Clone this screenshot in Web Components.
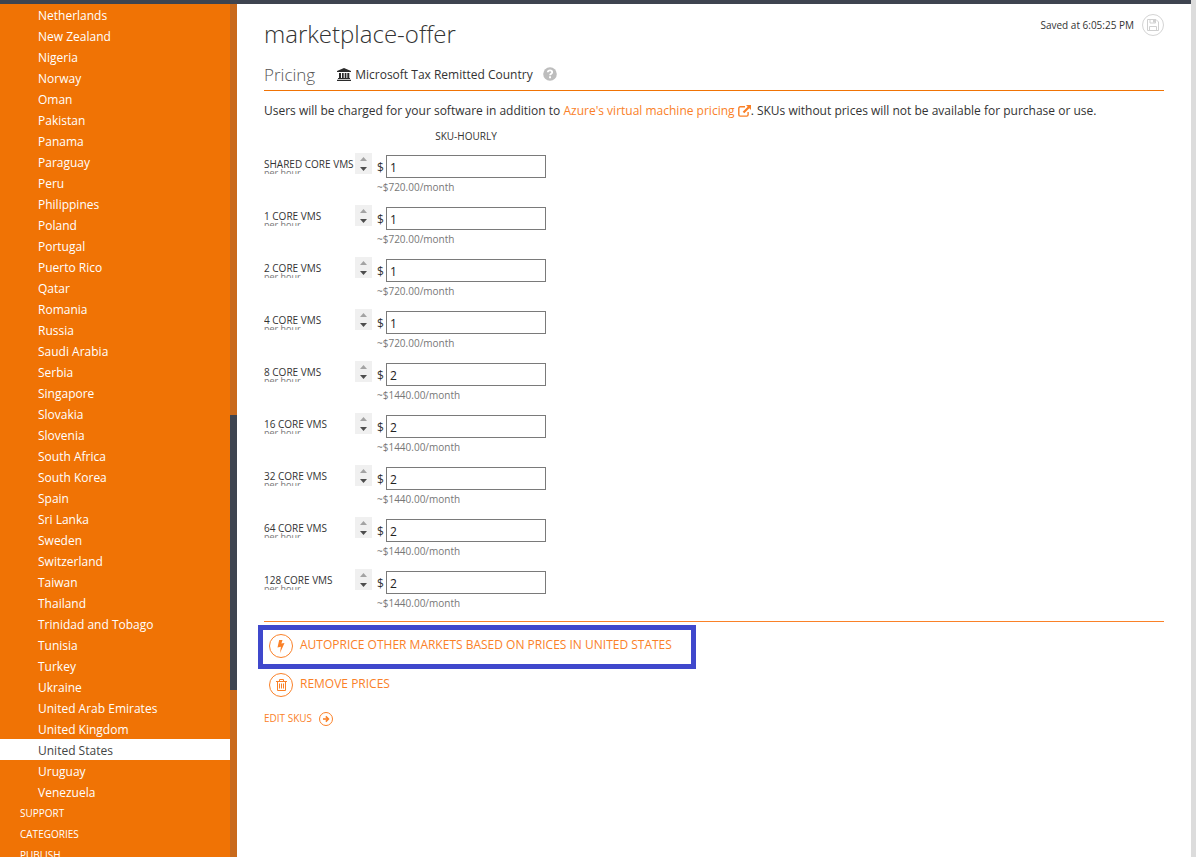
<!DOCTYPE html>
<html lang="en">
<head>
<meta charset="utf-8">
<title>marketplace-offer - Pricing</title>
<style>
  body { margin: 0; font: 12px/21px "Open Sans", "Noto Sans", sans-serif; color: #333;
    --brand: #f07305; --accent: #fa8128; --slate: #3e4450; }
</style>
</head>
<body>
<app-shell>
  <side-nav slot="nav"></side-nav>
  <pricing-page></pricing-page>
</app-shell>
<script>
const define = (name, html, setup) => {
  const t = document.createElement('template');
  t.innerHTML = html;
  customElements.define(name, class extends HTMLElement {
    constructor() {
      super();
      this.attachShadow({ mode: 'open' }).append(t.content.cloneNode(true));
    }
    connectedCallback() { if (setup) setup(this, this.shadowRoot); }
  });
};

define('app-shell', `
<style>
  :host { display: grid; grid-template-rows: 4px 1fr; grid-template-columns: auto 1fr 5px; height: 100vh; overflow: hidden; background: #fff; }
  .top { grid-column: 1 / 3; background: var(--slate); }
  .edge { grid-column: 3; grid-row: 1 / 3; background: #dcdcdc; }
  .nav { grid-row: 2; min-height: 0; }
  main { grid-row: 2; grid-column: 2; min-width: 0; min-height: 0; overflow: hidden; }
</style>
<div class="top"></div><div class="nav"><slot name="nav"></slot></div><main><slot></slot></main><div class="edge"></div>`);

define('nav-link', `
<style>
  :host { display: block; }
  a { display: block; padding: 2px 0 0 38px; line-height: 19px; color: #fff; text-decoration: none; white-space: nowrap; }
  :host([section]) a { padding-left: 20px; font-size: 10px; }
  :host([current]) a { background: #fff; color: #444; }
</style>
<a href="#"><slot></slot></a>`);

define('side-nav', `
<style>
  :host { display: flex; height: 100%; background: var(--brand); }
  nav { width: 230px; overflow: hidden; }
  .track { width: 7px; background: #c96a1c; display: grid; grid-template-rows: 411fr 275fr 167fr; }
  .thumb { grid-row: 2; background: var(--slate); }
</style>
<nav aria-label="Markets"></nav><div class="track"><div class="thumb"></div></div>`,
(host, root) => {
  const nav = root.querySelector('nav');
  const add = (text, attr) => {
    const el = document.createElement('nav-link');
    el.textContent = text;
    if (attr) el.setAttribute(attr, '');
    nav.append(el);
  };
  ['Netherlands','New Zealand','Nigeria','Norway','Oman','Pakistan','Panama','Paraguay','Peru','Philippines','Poland','Portugal','Puerto Rico','Qatar','Romania','Russia','Saudi Arabia','Serbia','Singapore','Slovakia','Slovenia','South Africa','South Korea','Spain','Sri Lanka','Sweden','Switzerland','Taiwan','Thailand','Trinidad and Tobago','Tunisia','Turkey','Ukraine','United Arab Emirates','United Kingdom','United States','Uruguay','Venezuela']
    .forEach(c => add(c, c === 'United States' ? 'current' : ''));
  ['SUPPORT', 'CATEGORIES', 'PUBLISH'].forEach(s => add(s, 'section'));
});

define('price-row', `
<style>
  :host { display: grid; grid-template-columns: 91px 17px 174px; height: 52px; align-items: start; }
  .name { height: 21px; overflow: hidden; white-space: nowrap; }
  label { display: block; padding-top: 5px; font-size: 10px; line-height: 12px; }
  small { display: block; font-size: 9px; line-height: 6px; color: #777; }
  .spin { display: block; width: 17px; height: 21px; background: #f0f0f0; }
  .field { padding: 2px 0 0 5px; }
  .line { display: flex; align-items: center; }
  .cur { width: 9px; padding-top: 2px; }
  input { box-sizing: border-box; width: 160px; height: 23px; border: 1px solid #7a7a7a; padding: 1px 3px 0; font: inherit; color: #222; background: #fff; border-radius: 0; }
  .month { font-size: 10px; line-height: 18px; color: #777; white-space: nowrap; }
</style>
<div class="name"><label for="price"></label><small>per hour</small></div>
<svg class="spin" viewBox="0 0 17 21" aria-hidden="true"><path d="M5 8 8.500 4 12 8z" fill="#a3a3a3"/><path d="M5 14h7l-3.500 4z" fill="#4d4d4d"/></svg>
<div class="field"><div class="line"><span class="cur">$</span><input id="price" type="text"></div><div class="month"></div></div>`,
(host, root) => {
  root.querySelector('label').textContent = host.getAttribute('name');
  root.querySelector('input').value = host.getAttribute('price');
  root.querySelector('.month').textContent = '~$' + host.getAttribute('price') * 720 + '.00/month';
});

define('ring-action', `
<style>
  :host { display: block; }
  button { display: flex; align-items: center; gap: 7px; margin: 0; padding: 0; border: 0; background: none; font: inherit; line-height: 20px; color: var(--accent); white-space: nowrap; cursor: pointer; }
  .ring { box-sizing: border-box; display: grid; place-items: center; width: 24px; height: 24px; border: 1px solid; border-radius: 50%; }
  .text { padding-bottom: 2px; }
</style>
<button type="button"><span class="ring"><slot name="icon"></slot></span><span class="text"><slot></slot></span></button>`);

define('pricing-page', `
<style>
  :host { display: block; padding: 0 27px; }
  header { display: flex; justify-content: space-between; height: 56px; }
  h1 { margin: 0; font-size: 24px; line-height: 60px; font-weight: 300; }
  .saved { display: flex; align-items: center; gap: 8px; height: 42px; font-size: 10px; }
  .saved button { box-sizing: border-box; width: 22px; height: 22px; padding: 0; border: 1px solid #d4d4d4; border-radius: 50%; background: none; color: #d0d0d0; display: grid; place-items: center; }
  .sub { display: flex; align-items: center; height: 28px; padding-bottom: 2px; border-bottom: 1px solid var(--brand); }
  h2 { margin: 0 22px 0 0; font-size: 17px; font-weight: 300; color: #555; }
  .sub svg { margin-right: 4px; }
  .sub .help { margin: 0 0 0 10px; }
  p { margin: 9px 0 0; line-height: 21px; }
  a { color: var(--accent); text-decoration: none; }
  p svg { vertical-align: -2px; }
  .head { width: 160px; margin: 5px 0 7px 122px; text-align: center; font-size: 10px; line-height: 20px; }
  .rows { border-bottom: 1px solid var(--accent); }
  .marked { width: fit-content; margin: 3px 0 0 -6px; padding: 4px 19px 6px 6px; border: 5px solid #3f48cc; }
  .remove { margin: 4px 0 0 5px; }
  .edit { display: flex; width: fit-content; align-items: center; gap: 7px; margin-top: 11px; font-size: 10px; }
</style>
<header><h1>marketplace-offer</h1>
  <div class="saved"><span>Saved at 6:05:25 PM</span><button type="button" aria-label="Save">
    <svg width="12" height="12" viewBox="0 0 12 12" fill="none" stroke="currentColor"><path d="M.5.5h8.500L11.500 3v8.500H.5z"/><path d="M3 .5V4h5.500V.5M2.500 11.500v-4h7v4"/><path d="M6 1h2v2.500H6z" fill="currentColor" stroke="none"/></svg></button></div>
</header>
<div class="sub"><h2>Pricing</h2>
  <svg width="14" height="13" viewBox="0 0 14 13" fill="#2b2b2b" aria-hidden="true"><path d="M7 0 14 3v1H0V3zM2 5h2v5H2zM5 5h1.700v5H5zM7.700 5h1.700v5H7.700zM10.300 5h2v5h-2zM1 10h12v1H1zM0 11.700h14V13H0z"/></svg>
  <span>Microsoft Tax Remitted Country</span>
  <svg class="help" width="14" height="14" viewBox="0 0 14 14" aria-hidden="true"><circle cx="7" cy="7" r="6.800" fill="#bdbdbd"/><path d="M4.800 5.300C4.900 3.900 5.800 3.400 7 3.400s2.200.7 2.200 1.800C9.200 6.700 7.100 6.700 7.100 8.300" fill="none" stroke="#fff" stroke-width="1.800"/><path d="M6.100 9.300H8v1.900H6.100z" fill="#fff"/></svg>
</div>
<p>Users will be charged for your software in addition to <a href="#">Azure's virtual machine pricing <svg width="13" height="12" viewBox="0 0 13 12" aria-hidden="true"><path d="M7 1.800H2.200Q.8 1.800.8 3.200v6.500q0 1.400 1.400 1.400h6.500q1.400 0 1.400-1.400V7" fill="none" stroke="currentColor" stroke-width="1.400"/><path d="M8 0h5v5l-1.700-1.700-5 5-1.600-1.600 5-5z" fill="currentColor"/></svg></a>. SKUs without prices will not be available for purchase or use.</p>
<div class="head">SKU-HOURLY</div>
<div class="rows">
  <price-row name="SHARED CORE VMS" price="1"></price-row>
  <price-row name="1 CORE VMS" price="1"></price-row>
  <price-row name="2 CORE VMS" price="1"></price-row>
  <price-row name="4 CORE VMS" price="1"></price-row>
  <price-row name="8 CORE VMS" price="2"></price-row>
  <price-row name="16 CORE VMS" price="2"></price-row>
  <price-row name="32 CORE VMS" price="2"></price-row>
  <price-row name="64 CORE VMS" price="2"></price-row>
  <price-row name="128 CORE VMS" price="2"></price-row>
</div>
<div class="marked"><ring-action><svg slot="icon" width="8" height="13" viewBox="0 0 8 13" fill="currentColor"><path d="M2.200 0H5.500L4.400 3.600 7.500 3 3 13l.9-6.200L.5 7.600z"/></svg>AUTOPRICE OTHER MARKETS BASED ON PRICES IN UNITED STATES</ring-action></div>
<ring-action class="remove"><svg slot="icon" width="11" height="12" viewBox="0 0 11 12" fill="none" stroke="currentColor"><path d="M0 2.500h11M3.500 2.500V.5h4v2M1.500 2.500v9h8v-9M3.500 4.500v5M5.500 4.500v5M7.500 4.500v5"/></svg>REMOVE PRICES</ring-action>
<a class="edit" href="#">EDIT SKUS <svg width="14" height="14" viewBox="0 0 14 14" fill="none" stroke="currentColor" aria-hidden="true"><circle cx="7" cy="7" r="6.500"/><path d="M4 7h5" stroke-width="1.600"/><path d="M6.800 4.400 9.400 7 6.800 9.600" stroke-width="1.600"/></svg></a>`);
</script>
</body>
</html>
